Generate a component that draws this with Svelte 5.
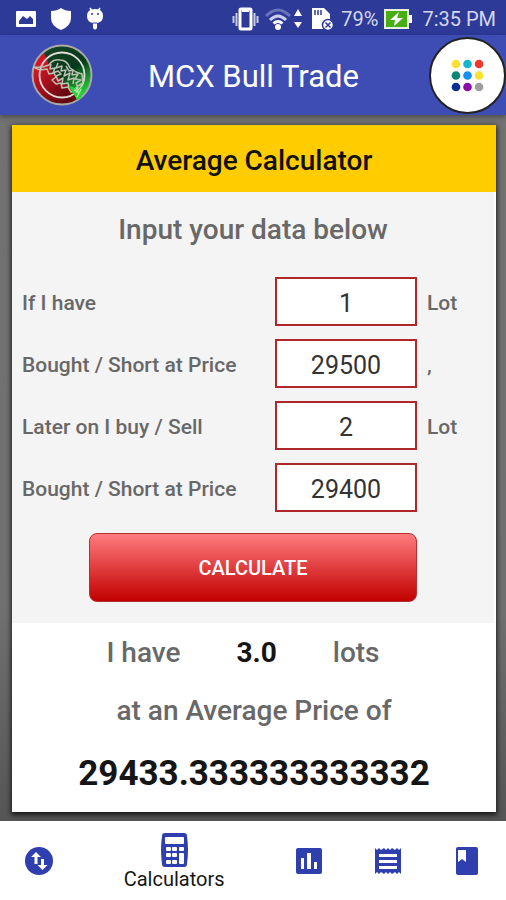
<script>
  let firstLots = $state('1');
  let firstPrice = $state('29500');
  let nextLots = $state('2');
  let nextPrice = $state('29400');
  let totalLots = $state('3.0');
  let average = $state('29433.333333333332');

  const dots = ['#fbe032', '#16b5cf', '#f0372b', '#078575', '#168eef', '#f6e32f', '#0c2c96', '#8b0ca6', '#9d9d9d'];

  function calculate(event) {
    event.preventDefault();
    const a = Number(firstLots);
    const b = Number(nextLots);
    const total = a + b;
    if (!total) return;
    totalLots = total.toFixed(1);
    average = String((a * Number(firstPrice) + b * Number(nextPrice)) / total);
  }
</script>

<div class="app">
  <div class="status">
    <div class="group left">
      <svg width="20" height="16" viewBox="0 0 20 16"><path fill="#fff" fill-rule="evenodd" d="M1 0h18q1 0 1 1v14q0 1-1 1H1q-1 0-1-1V1q0-1 1-1zM3 13h14V8l-3-3-3 3-4-3-4 5z" /></svg>
      <svg width="22" height="22" viewBox="0 0 22 22"><path fill="#fff" d="M11 0q4 3 10 3v7q0 8-10 12Q1 18 1 10V3q6 0 10-3z" /></svg>
      <svg width="18" height="23" viewBox="0 0 18 23"><path d="M4 1l2 3M14 1l-2 3" stroke="#fff" stroke-width="1.5" /><path fill="#fff" d="M1 9q0-7 8-7t8 7q0 6-6 7v5q-2 3-4 0v-5q-6-1-6-7z" /><circle cx="6" cy="7" r="1" fill="#2d3b98" /><circle cx="12" cy="7" r="1" fill="#2d3b98" /><path d="M7 16h4" stroke="#2d3b98" /></svg>
    </div>
    <div class="group right">
      <svg width="27" height="24" viewBox="0 0 27 24"><path d="M1.5 9v7M4.5 6v13M22.5 6v13M25.5 9v7" stroke="#c9cdea" stroke-width="2" /><rect x="8" y="2" width="11" height="20" rx="1" fill="none" stroke="#fff" stroke-width="3" /><path d="M10 4h7" stroke="#fff" stroke-width="2" /></svg>
      <svg width="38" height="24" viewBox="0 0 38 24"><path d="M1 9q12-12 24 0" fill="none" stroke="#6873bb" stroke-width="3" /><path d="M5 13q8-8 16 0" fill="none" stroke="#cbd0ef" stroke-width="3" /><path d="M8.500 16.500q4.500-4 9 0" fill="none" stroke="#fff" stroke-width="3" /><circle cx="13" cy="20" r="3" fill="#fff" /><path d="M33 2l4 7h-8zM33 21l4-6h-8z" fill="#fff" /></svg>
      <svg class="sd" width="24" height="24" viewBox="0 0 24 24"><path d="M1 1h12l6 6v15H1z" fill="#fff" /><path d="M4 3v5M7 3v5M10 3v5" stroke="#2d3b98" stroke-width="1.500" /><circle cx="17" cy="18" r="5.500" fill="#fff" stroke="#2d3b98" stroke-width="1.500" /><path d="M14.500 15.500l5 5M19.500 15.500l-5 5" stroke="#2d3b98" stroke-width="1.500" /></svg>
      <span>79%</span>
      <svg class="battery" width="28" height="20" viewBox="0 0 28 20"><rect x="1" y="1" width="23" height="18" fill="#49ae16" stroke="#e8f0e4" stroke-width="2" /><path d="M25 6h3v8h-3z" fill="#fff" /><path d="M15 3L6 11h5l-1 6 9-8h-6z" fill="#fff" /></svg>
      <span>7:35 PM</span>
    </div>
  </div>

  <header>
    <svg class="logo" viewBox="0 0 62 62" role="img" aria-label="Bull logo">
      <defs>
        <linearGradient id="red" x1="0" y1="0" x2="1" y2="1"><stop offset="0.200" stop-color="#d51525" /><stop offset="0.800" stop-color="#650811" /></linearGradient>
        <linearGradient id="green" x1="0" y1="0" x2="0.700" y2="1"><stop offset="0" stop-color="#164326" /><stop offset="0.600" stop-color="#07391b" /><stop offset="1" stop-color="#22c934" /></linearGradient>
      </defs>
      <circle cx="31" cy="31" r="29" fill="url(#red)" />
      <path d="M12 9A29 29 0 0 1 50 53L40 46 31 36 22 29 16 22 10 15z" fill="url(#green)" />
      <path d="M3 22l10-13 6 14-2 6 9 12 12 6 6 10q-13 6-28-1Q2 47 2 31z" fill="url(#red)" />
      <circle cx="31" cy="31" r="29.500" fill="none" stroke="#a9aaa4" stroke-width="2" />
      <circle cx="31" cy="31" r="22.500" fill="none" stroke="#e3ddda" stroke-width="1.800" />
      <g fill="none" stroke="#b9c1b0" stroke-width="1.500" stroke-linejoin="round">
        <path d="M2 23q9 1 16-2 4-6 11-5 7 0 10 8l6 4 6 2 1 9-5 3" />
        <path d="M2 23l7 3 7-1 2 5 5-1 2 4-4 3 4 4 5-1 1 5 6-1 3 5 5-1" />
        <path d="M20 20l-1 5 5-1-2 5 5-2 3 3-5 2 2 5 5-3-1 6 6-1 1 4M27 19l-2 5 6-2-1 5 5-1-2 6 6-3-2 7 6-2-1 6M35 22l3 5 4-1-1 5 6-1-3 5 6 1-5 3 2 5-4 2" />
      </g>
      <path d="M38 42l6 2 1 5 7-8-2 13-4 2z" fill="#2bd23a" />
      <path d="M43 46l4 2-2-5M46 53l4-8" stroke="#b9edae" stroke-width="1.200" fill="none" />
    </svg>
    <h1>MCX Bull Trade</h1>
    <button class="menu" aria-label="Menu">
      <svg viewBox="0 0 76 76">
        {#each dots as color, i}
          <circle cx={26 + (i % 3) * 12} cy={26 + Math.floor(i / 3) * 12} r="4.500" fill={color} />
        {/each}
      </svg>
    </button>
  </header>

  <main>
    <section class="card">
      <h2>Average Calculator</h2>
      <form onsubmit={calculate}>
        <h3>Input your data below</h3>
        <div class="row"><label for="lots1">If I have</label><input id="lots1" inputmode="decimal" bind:value={firstLots} /><span>Lot</span></div>
        <div class="row"><label for="price1">Bought / Short at Price</label><input id="price1" inputmode="decimal" bind:value={firstPrice} /><span>,</span></div>
        <div class="row"><label for="lots2">Later on I buy / Sell</label><input id="lots2" inputmode="decimal" bind:value={nextLots} /><span>Lot</span></div>
        <div class="row"><label for="price2">Bought / Short at Price</label><input id="price2" inputmode="decimal" bind:value={nextPrice} /><span></span></div>
        <button class="calculate">CALCULATE</button>
      </form>
      <div class="result">
        <p class="lots"><span>I have</span><strong>{totalLots}</strong><span>lots</span></p>
        <p>at an Average Price of</p>
        <output for="lots1 price1 lots2 price2">{average}</output>
      </div>
    </section>
  </main>

  <nav>
    <a href="#convert" aria-label="Convert">
      <svg width="28" height="28" viewBox="0 0 28 28"><circle cx="14" cy="14" r="14" fill="#303fae" /><path d="M11 5l5 5h-3.500v7h-3v-7H6zM17.500 23l-5-5H16v-6h3v6h3.500z" fill="#fff" /></svg>
    </a>
    <a class="active" href="#calculators">
      <svg width="27" height="34" viewBox="0 0 27 34"><path d="M4 0h19q3 0 3 3 2 14 0 28 0 3-3 3H4q-3 0-3-3-2-14 0-28 0-3 3-3z" fill="#303fae" /><rect x="4" y="4" width="19" height="7" rx="1" fill="#fff" /><g fill="#fff"><rect x="5" y="14" width="5" height="4" rx="1" /><rect x="11" y="14" width="5" height="4" rx="1" /><rect x="18" y="14" width="5" height="4" rx="1" /><rect x="5" y="20" width="5" height="4" rx="1" /><rect x="11" y="20" width="5" height="4" rx="1" /><rect x="18" y="20" width="5" height="11" rx="1" /><rect x="5" y="27" width="5" height="4" rx="1" /><rect x="11" y="27" width="5" height="4" rx="1" /></g></svg>
      <span>Calculators</span>
    </a>
    <a href="#charts" aria-label="Charts">
      <svg width="26" height="26" viewBox="0 0 26 26"><rect width="26" height="26" rx="2" fill="#303fae" /><path d="M5 10h3v11H5zM11 5h4v16h-4zM18 14h3v7h-3z" fill="#fff" /></svg>
    </a>
    <a href="#reports" aria-label="Reports">
      <svg width="26" height="26" viewBox="0 0 26 26"><path d="M0 0l2 2 2-2 2 2 3-2 2 2 2-2 2 2 2-2 3 2 2-2 2 2 2-2v26l-2-2-2 2-2-2-3 2-2-2-2 2-2-2-2 2-3-2-2 2-2-2-2 2z" fill="#303fae" /><path d="M4 7.500h18M4 13.500h18M4 19.500h18" stroke="#fff" stroke-width="3" /></svg>
    </a>
    <a href="#journal" aria-label="Journal">
      <svg width="24" height="28" viewBox="0 0 24 28"><rect x="1" width="22" height="28" rx="2" fill="#303fae" /><path d="M3 3h8v12l-4-3-4 3z" fill="#fff" /></svg>
    </a>
  </nav>
</div>

<style>
  :global(body) { margin: 0; }
  .app {
    min-height: 100vh;
    display: flex;
    flex-direction: column;
    font-family: Roboto, "Liberation Sans", sans-serif;
    font-weight: 500;
    color: #686868;
    background: #fff;
  }
  h1, h2, h3, p { margin: 0; font-weight: 500; }
  svg { display: block; flex: none; }
  .status {
    height: 35px;
    padding: 0 10px 0 16px;
    display: flex;
    align-items: center;
    justify-content: space-between;
    background: #2d3a98;
    color: #d5d8ef;
    font-size: 20px;
    font-weight: 400;
    white-space: nowrap;
  }
  .group { display: flex; align-items: center; padding-top: 2px; }
  .left { gap: 14px; }
  .right { gap: 6px; }
  .sd { margin-left: 2px; }
  .battery { margin-right: 4px; }
  header {
    height: 80px;
    padding-left: 31px;
    box-sizing: border-box;
    display: flex;
    align-items: center;
    background: #3e4db4;
    position: relative;
    z-index: 1;
    box-shadow: 0 2px 5px #0005;
  }
  .logo { width: 62px; height: 62px; }
  h1 { flex: 1; padding: 4px 0 0 55px; color: #fff; font-size: 31px; line-height: 36px; font-weight: 400; white-space: nowrap; }
  .menu {
    width: 77px;
    height: 77px;
    box-sizing: border-box;
    padding: 0;
    border: 2px solid #222;
    border-radius: 50%;
    background: #fff;
  }
  main { flex: 1; padding: 10px 10px 9px 12px; background: linear-gradient(#727272, #707070 70%, #555); }
  .card { background: #fff; box-shadow: 0 2px 5px 1px #000b; }
  h2 { background: #fc0; color: #111; font-size: 28px; line-height: 67px; padding-top: 2px; height: 65px; text-align: center; }
  form { background: #f4f4f4; margin-right: 2px; padding-bottom: 21px; }
  h3 { font-size: 28px; line-height: 76px; padding-bottom: 9px; text-align: center; }
  .row {
    display: grid;
    grid-template-columns: 1fr 142px 67px;
    column-gap: 10px;
    align-items: center;
    padding-left: 10px;
    margin-bottom: 13px;
    font-size: 21px;
    line-height: 25px;
  }
  .row label, .row span { padding-top: 3px; }
  .row input {
    width: 100%;
    height: 49px;
    box-sizing: border-box;
    border: 2px solid #b0272a;
    border-radius: 0;
    padding: 3px 0 0;
    background: #fff;
    color: #333;
    font: 400 25px Roboto, "Liberation Sans", sans-serif;
    text-align: center;
  }
  .calculate {
    display: block;
    width: 68%;
    height: 69px;
    margin: 21px auto 0;
    border: 1px solid #b52e32;
    border-radius: 8px;
    background: linear-gradient(#ff7b7e, #c20000);
    color: #fff;
    font: 500 20px Roboto, "Liberation Sans", sans-serif;
  }
  .result { padding-bottom: 9px; text-align: center; font-size: 28px; line-height: 58px; }
  .lots { display: flex; justify-content: center; gap: 56px; padding-top: 1px; margin-right: 22px; }
  .lots strong, output { color: #151515; font-weight: 700; }
  output { display: block; font-size: 35px; line-height: 58px; padding-top: 5px; }
  nav {
    height: 79px;
    display: grid;
    grid-template-columns: 79fr 191fr 79fr 79fr 79fr;
    align-items: center;
    background: #fff;
  }
  nav a { display: flex; flex-direction: column; align-items: center; color: #161616; text-decoration: none; font-weight: 400; }
  .active { padding-top: 4px; }
  .active span { font-size: 20px; line-height: 25px; }
</style>
